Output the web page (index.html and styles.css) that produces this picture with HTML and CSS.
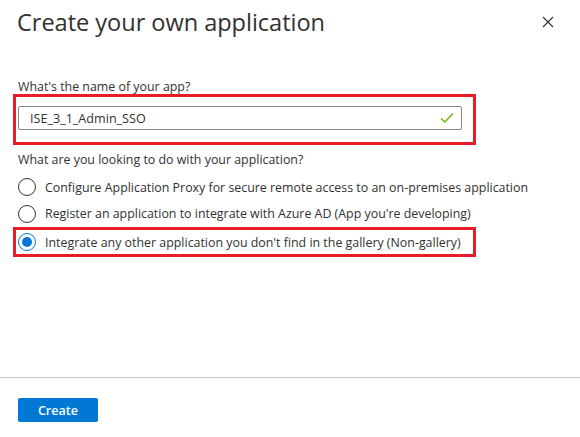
FILE: index.html
```html
<!DOCTYPE html>
<html>
<head>
<meta charset="utf-8">
<link rel="stylesheet" href="styles.css">
</head>
<body>
<div class="panel">
  <div class="header">
    <h1 class="title">Create your own application</h1>
    <button class="close" aria-label="Close">
      <svg width="12" height="12" viewBox="0 0 12 12"><path d="M1 1L11 11M11 1L1 11" stroke="#323130" stroke-width="1.1" fill="none"/></svg>
    </button>
  </div>
  <div class="content">
    <div class="label">What's the name of your app?</div>
    <div class="highlight name-box">
      <div class="input">
        <span class="input-text">ISE_3_1_Admin_SSO</span>
        <svg class="check" width="14" height="12" viewBox="0 0 14 12"><path d="M1 6.5L4.8 10L13 1.5" stroke="#6bb700" stroke-width="1.4" fill="none"/></svg>
      </div>
    </div>
    <div class="question">What are you looking to do with your application?</div>
    <div class="radios">
      <div class="radio-row"><span class="radio"></span><span class="radio-label">Configure Application Proxy for secure remote access to an on-premises application</span></div>
      <div class="radio-row"><span class="radio"></span><span class="radio-label">Register an application to integrate with Azure AD (App you're developing)</span></div>
      <div class="highlight radio-box">
        <div class="radio-row"><span class="radio checked"></span><span class="radio-label">Integrate any other application you don't find in the gallery (Non-gallery)</span></div>
      </div>
    </div>
  </div>
  <div class="footer">
    <button class="primary">Create</button>
  </div>
</div>
</body>
</html>
```
FILE: styles.css
```css
* { box-sizing: border-box; }
html, body { margin: 0; padding: 0; background: #fff; }
body {
  font-family: "Open Sans", "Noto Sans", "Liberation Sans", sans-serif;
  color: #323130;
  font-size: 12.4px;
}
.panel { width: 580px; height: 437px; display: flex; flex-direction: column; }
.header {
  display: flex;
  align-items: center;
  justify-content: space-between;
  padding: 4px 26px 0 17px;
  height: 40px;
}
.title {
  margin: 0;
  font-size: 23.6px;
  font-weight: 500;
  letter-spacing: -0.05px;
  line-height: 32px;
}
.close {
  border: 0; background: none; padding: 0; width: 12px; height: 12px;
  display: flex;
}
.content { padding: 38px 0 0 18px; flex: 1; }
.label { line-height: 18px; height: 16px; }
.highlight { border: 3px solid #ea1d26; }
.name-box {
  margin-left: -5px;
  width: 463px;
  padding: 9px 0 12px 2px;
}
.input {
  width: 444px;
  height: 24px;
  border: 1px solid #8a8886;
  border-radius: 2px;
  display: flex;
  align-items: center;
  justify-content: space-between;
  padding: 0 7px 0 11px;
}
.input-text { font-size: 12.6px; }
.question { margin-top: 6px; line-height: 18px; }
.radios { margin-top: 9px; display: flex; flex-direction: column; gap: 8.5px; }
.radio-row { display: flex; align-items: center; height: 18px; gap: 9px; white-space: nowrap; }
.radio {
  width: 18px; height: 18px; border-radius: 50%;
  border: 1px solid #323130; flex: none; position: relative;
}
.radio.checked { border-color: #0078d4; }
.radio.checked::after {
  content: ""; position: absolute; left: 3px; top: 3px;
  width: 10px; height: 10px; border-radius: 50%; background: #0078d4;
}
.radio-box {
  margin-left: -5px;
  width: 463px;
  padding: 3px 0 3px 2px;
  margin-top: -4px;
}
.footer {
  border-top: 1px solid #c8c6c4;
  height: 60px;
  padding: 20px 0 0 18px;
}
.primary {
  width: 80px; height: 24px;
  background: #0078d4; color: #fff;
  border: 0; border-radius: 2px;
  font-family: inherit; font-weight: 600; font-size: 12.6px;
  padding: 0;
}
```
